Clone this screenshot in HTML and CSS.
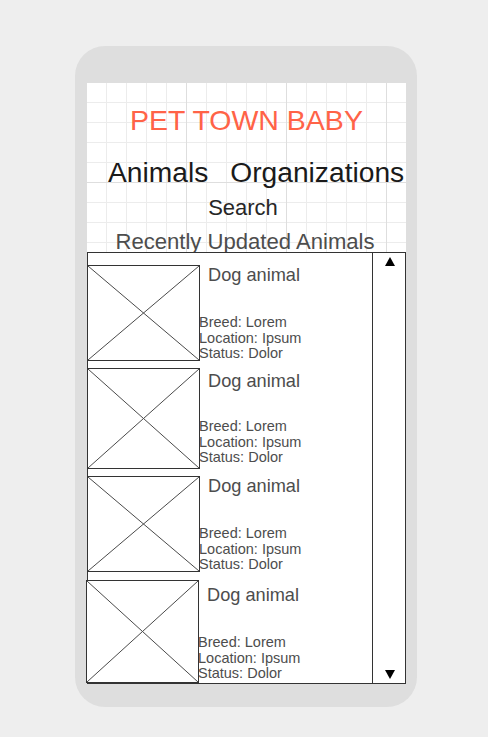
FILE: index.html
```html
<!DOCTYPE html>
<html lang="en">
<head>
<meta charset="utf-8">
<title>Pet Town Baby</title>
<link rel="stylesheet" href="styles.css">
</head>
<body>
<div class="phone">
  <div class="screen">
    <h1 class="brand">PET TOWN BABY</h1>
    <nav class="nav">
      <span class="nav-link">Animals</span>
      <span class="nav-link">Organizations</span>
    </nav>
    <div class="search">Search</div>
    <h2 class="recent">Recently Updated Animals</h2>
    <div class="list">
      <div class="items">
        <div class="item item--a">
          <div class="thumb"><svg class="thumb-x" viewBox="0 0 100 100" preserveAspectRatio="none"><line x1="0" y1="0" x2="100" y2="100"/><line x1="100" y1="0" x2="0" y2="100"/></svg></div>
          <div class="info">
            <div class="name">Dog animal</div>
            <div class="details">Breed: Lorem<br>Location: Ipsum<br>Status: Dolor</div>
          </div>
        </div>
        <div class="item item--b">
          <div class="thumb"><svg class="thumb-x" viewBox="0 0 100 100" preserveAspectRatio="none"><line x1="0" y1="0" x2="100" y2="100"/><line x1="100" y1="0" x2="0" y2="100"/></svg></div>
          <div class="info">
            <div class="name">Dog animal</div>
            <div class="details">Breed: Lorem<br>Location: Ipsum<br>Status: Dolor</div>
          </div>
        </div>
        <div class="item item--c">
          <div class="thumb"><svg class="thumb-x" viewBox="0 0 100 100" preserveAspectRatio="none"><line x1="0" y1="0" x2="100" y2="100"/><line x1="100" y1="0" x2="0" y2="100"/></svg></div>
          <div class="info">
            <div class="name">Dog animal</div>
            <div class="details">Breed: Lorem<br>Location: Ipsum<br>Status: Dolor</div>
          </div>
        </div>
        <div class="item item--d">
          <div class="thumb"><svg class="thumb-x" viewBox="0 0 100 100" preserveAspectRatio="none"><line x1="0" y1="0" x2="100" y2="100"/><line x1="100" y1="0" x2="0" y2="100"/></svg></div>
          <div class="info">
            <div class="name">Dog animal</div>
            <div class="details">Breed: Lorem<br>Location: Ipsum<br>Status: Dolor</div>
          </div>
        </div>
      </div>
      <div class="scroll">
        <svg class="arrow" width="10" height="9" viewBox="0 0 10 9"><polygon points="5,0 10,9 0,9"/></svg>
        <svg class="arrow" width="10" height="9" viewBox="0 0 10 9"><polygon points="0,0 10,0 5,9"/></svg>
      </div>
    </div>
  </div>
</div>
</body>
</html>
```

FILE: styles.css
```css
html, body {
  margin: 0;
  padding: 0;
}

body {
  background: #eeeeee;
  font-family: "Liberation Sans", Arial, sans-serif;
  width: 488px;
  height: 737px;
  overflow: hidden;
}

.phone {
  margin: 46px 0 0 75px;
  width: 342px;
  height: 661px;
  box-sizing: border-box;
  padding: 36px 11px 24px;
  background: #dedede;
  border-radius: 30px;
}

.screen {
  width: 320px;
  height: 601px;
  box-sizing: border-box;
  padding-top: 24px;
  display: flex;
  flex-direction: column;
  background-color: #ffffff;
  background-image:
    linear-gradient(to right, #dedede 1px, transparent 1px),
    linear-gradient(to bottom, #dedede 1px, transparent 1px),
    linear-gradient(to right, #ececec 1px, transparent 1px),
    linear-gradient(to bottom, #ececec 1px, transparent 1px);
  background-size: 100px 100px, 100px 100px, 20px 20px, 20px 20px;
}

.brand {
  margin: 0;
  font-weight: normal;
  font-size: 28.5px;
  line-height: 28px;
  color: #ff6347;
  text-align: center;
  padding-left: 1px;
  white-space: nowrap;
}

.nav {
  margin-top: 24px;
  display: flex;
  gap: 22px;
  padding-left: 22px;
  font-size: 28.2px;
  line-height: 28px;
  color: #1a1a1a;
  white-space: nowrap;
}

.search {
  margin-top: 11px;
  font-size: 22px;
  line-height: 22px;
  color: #262626;
  text-align: center;
  padding-right: 6px;
}

.recent {
  margin: 12px 0 -1px;
  font-weight: normal;
  font-size: 22.1px;
  line-height: 22px;
  color: #4d4d4d;
  text-align: center;
  padding-right: 2px;
  white-space: nowrap;
}

.list {
  position: relative;
  flex: 1;
  margin-left: 1px;
  width: 319px;
  box-sizing: border-box;
  border: 1px solid #333333;
  background: #ffffff;
  display: flex;
}

.items {
  flex: 1;
  padding-top: 12px;
  display: flex;
  flex-direction: column;
}

.item {
  display: flex;
}

.thumb {
  flex: none;
  width: 113px;
  margin-left: -1px;
  box-sizing: border-box;
  border: 1px solid #333333;
  background: #ffffff;
}

.thumb-x {
  display: block;
  width: 100%;
  height: 100%;
}

.thumb-x line {
  stroke: #4a4a4a;
  stroke-width: 1;
  vector-effect: non-scaling-stroke;
}

.info {
  margin-left: -2px;
  display: flex;
  flex-direction: column;
  justify-content: space-between;
  color: #4d4d4d;
  white-space: nowrap;
}

.name {
  padding-left: 10px;
  font-size: 18.2px;
  line-height: 18px;
}

.details {
  font-size: 14.5px;
  line-height: 15.7px;
  padding-left: 1px;
  margin-bottom: -1px;
}

.item--a { height: 96px; }
.item--a .info { padding: 1px 0 0; }

.item--b { height: 101px; margin-top: 7px; }
.item--b .info { padding: 3.5px 0 4px; }

.item--c { height: 96px; margin-top: 7px; }
.item--c .info { padding: 1px 0 0; }

.item--d { height: 103px; margin-top: 8px; }
.item--d .thumb { margin-left: -2px; }
.item--d .info { padding: 6px 0 2px; }

.scroll {
  flex: none;
  width: 33px;
  box-sizing: border-box;
  border-left: 1px solid #333333;
  padding: 4px 0 4px 1px;
  display: flex;
  flex-direction: column;
  justify-content: space-between;
  align-items: center;
}

.arrow {
  display: block;
  fill: #000000;
}
```
